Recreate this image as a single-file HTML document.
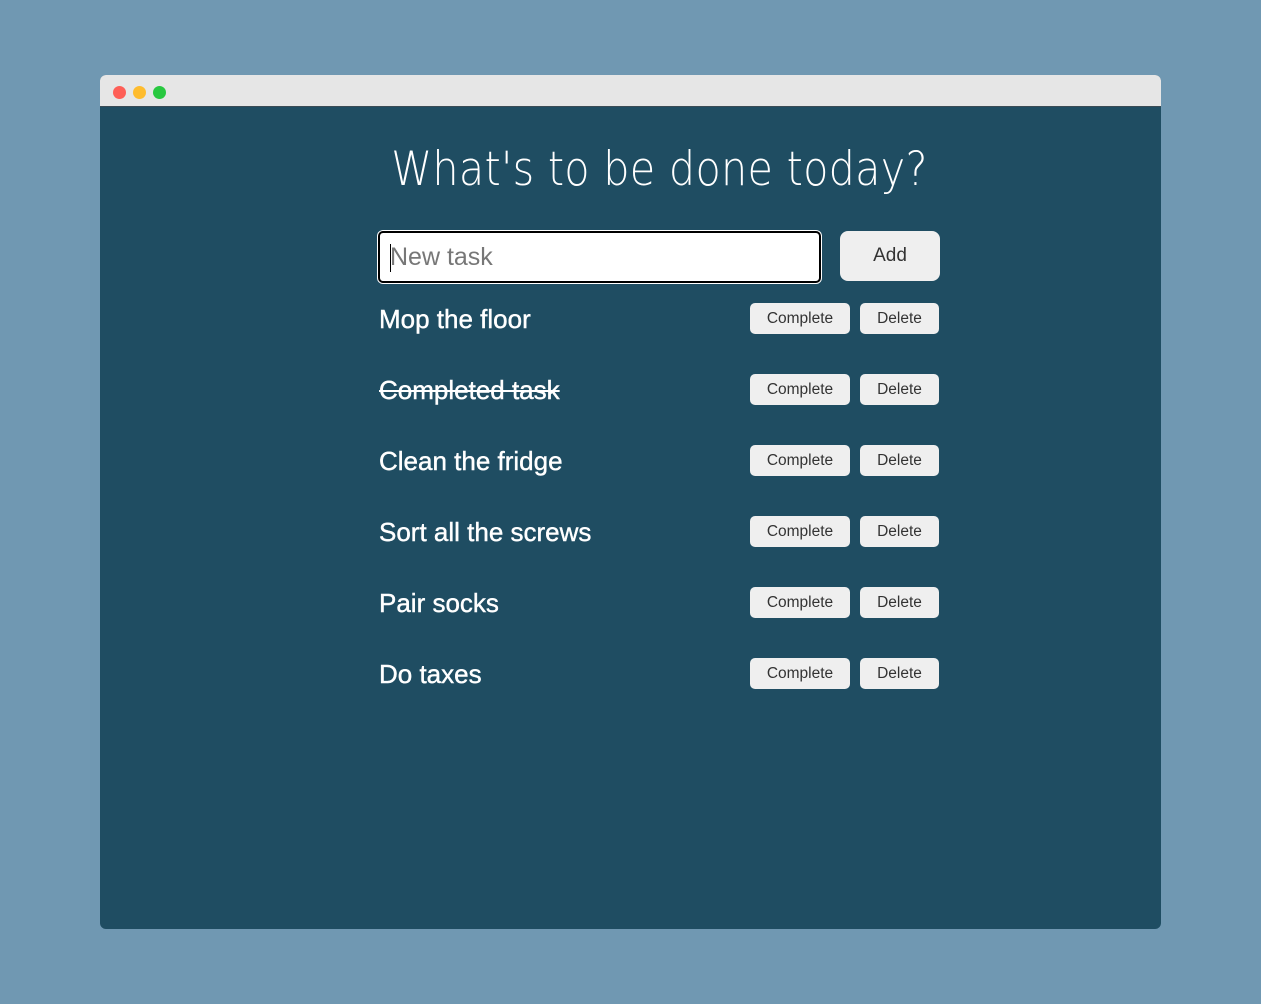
<!DOCTYPE html>
<html><head><meta charset="utf-8"><style>
*{margin:0;padding:0;box-sizing:border-box}
html,body{width:1261px;height:1004px;background:#7098b2;overflow:hidden;font-family:"Liberation Sans",sans-serif}
.win{position:absolute;left:100px;top:75px;width:1061px;height:854px;background:#1f4d62;border-radius:6px;overflow:hidden}
.bar{position:absolute;left:0;top:0;width:100%;height:32px;background:#e6e6e6;border-bottom:1px solid #3a4b55}
.dot{position:absolute;top:11px;width:13px;height:13px;border-radius:50%}
h1{position:absolute;left:29px;width:1261px;top:141px;text-align:center;color:#fff;font-size:47px;letter-spacing:0.3px;line-height:58px;font-family:"DejaVu Sans","Liberation Sans",sans-serif;font-weight:200;transform:scaleX(0.88)}
.input{position:absolute;left:378px;top:231px;width:443px;height:52px;background:#fff;border:2px solid #000;border-radius:5px;box-shadow:0 0 0 1px #fff}
.input span{position:absolute;left:10px;top:10px;font-size:25px;color:#777;line-height:28px}
.input i{position:absolute;left:10px;top:11px;width:1px;height:28px;background:#000}
.add{position:absolute;left:840px;top:231px;width:100px;height:50px;background:#efefef;border-radius:8px;color:#333;font-size:19px;text-align:center;line-height:50px}
.t{position:absolute;left:379px;color:#fff;font-size:26px;line-height:30px;-webkit-text-stroke:0.4px #fff}
.b{position:absolute;height:31px;background:#efefef;border-radius:5px;color:#333;font-size:15.5px;text-align:center;line-height:31px}
.c{left:750px;width:100px}.d{left:860px;width:79px}
</style></head><body>
<div class="win"><div class="bar">
<div class="dot" style="left:13px;background:#fe5f57"></div>
<div class="dot" style="left:33px;background:#febc2e"></div>
<div class="dot" style="left:53px;background:#28c840"></div>
</div></div>
<h1>What's to be done today?</h1>
<div class="input"><i></i><span>New task</span></div>
<div class="add">Add</div>

<div class="t" style="top:304px">Mop the floor</div>
<div class="b c" style="top:303px">Complete</div><div class="b d" style="top:303px">Delete</div>
<div class="t" style="top:375px;text-decoration:line-through">Completed task</div>
<div class="b c" style="top:374px">Complete</div><div class="b d" style="top:374px">Delete</div>
<div class="t" style="top:446px">Clean the fridge</div>
<div class="b c" style="top:445px">Complete</div><div class="b d" style="top:445px">Delete</div>
<div class="t" style="top:517px">Sort all the screws</div>
<div class="b c" style="top:516px">Complete</div><div class="b d" style="top:516px">Delete</div>
<div class="t" style="top:588px">Pair socks</div>
<div class="b c" style="top:587px">Complete</div><div class="b d" style="top:587px">Delete</div>
<div class="t" style="top:659px">Do taxes</div>
<div class="b c" style="top:658px">Complete</div><div class="b d" style="top:658px">Delete</div>
</body></html>
